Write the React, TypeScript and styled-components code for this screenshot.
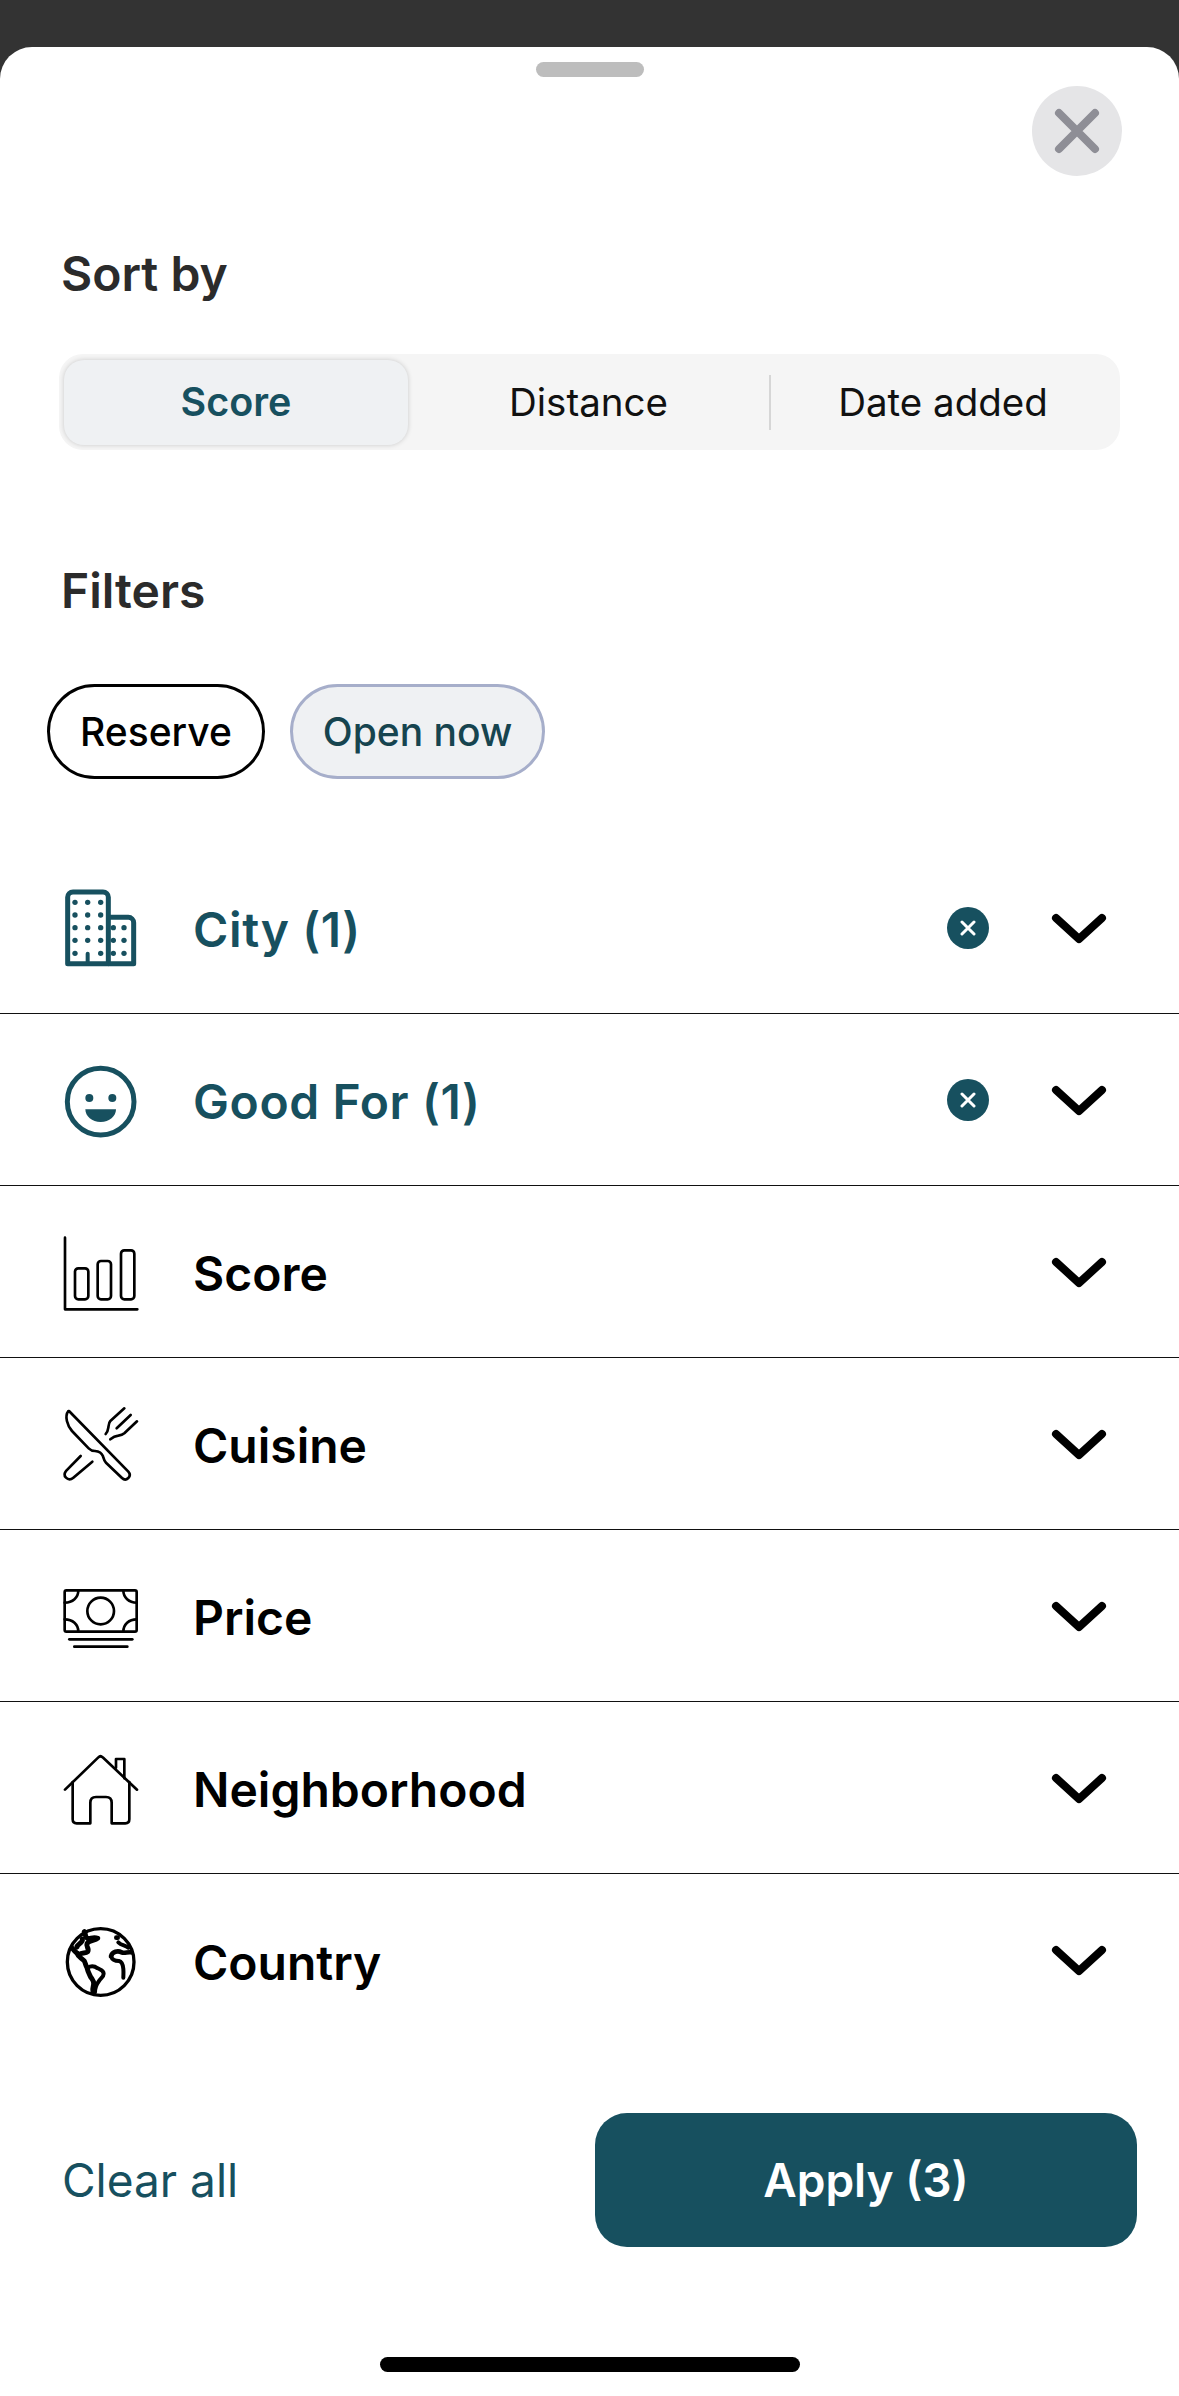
import React from "react";
import styled, { createGlobalStyle } from "styled-components";

const TEAL = "#17505f";

const GlobalStyle = createGlobalStyle`
    html, body {
        margin: 0;
        padding: 0;
        background: #fff;
    }
    * {
        box-sizing: border-box;
    }
    body {
        font-family: "Inter", "Liberation Sans", sans-serif;
    }
`;

const Page = styled.div`
    width: 1179px;
    height: 2396px;
    overflow: hidden;
    display: flex;
    flex-direction: column;
    background: #333333;
    padding-top: 47px;
`;

const Sheet = styled.div`
    flex: 1;
    display: flex;
    flex-direction: column;
    background: #fff;
    border-radius: 32px 32px 0 0;
    padding-top: 15px;
`;

const Handle = styled.div`
    width: 108px;
    height: 15px;
    border-radius: 8px;
    background: #bdbdbd;
    align-self: center;
`;

const CloseButton = styled.button`
    width: 90px;
    height: 90px;
    margin: 9px 57px 0 0;
    padding: 0;
    border: none;
    border-radius: 50%;
    background: #e5e5e7;
    align-self: flex-end;
    display: flex;
    align-items: center;
    justify-content: center;
`;

const Heading = styled.h2<{ $top: number }>`
    margin: ${(p) => p.$top}px 0 0 61px;
    font-size: 48px;
    line-height: 58px;
    font-weight: 600;
    color: #2b2b2b;
`;

const Segments = styled.div`
    margin: 51px 59px 0;
    height: 96px;
    padding: 5px;
    border-radius: 24px;
    background: #f5f5f5;
    display: flex;
    align-items: center;
`;

const Segment = styled.div<{ $active?: boolean; $width: number }>`
    width: ${(p) => p.$width}px;
    height: 85px;
    display: flex;
    align-items: center;
    justify-content: center;
    border-radius: 20px;
    font-size: ${(p) => (p.$active ? 39.5 : 38.5)}px;
    font-weight: ${(p) => (p.$active ? 600 : 400)};
    color: ${(p) => (p.$active ? TEAL : "#111")};
    background: ${(p) => (p.$active ? "#eff1f3" : "transparent")};
    box-shadow: ${(p) => (p.$active ? "0 0 5px rgba(0,0,0,0.18)" : "none")};
`;

const SegmentDivider = styled.div`
    width: 2px;
    height: 55px;
    background: #d6d6d6;
`;

const Pills = styled.div`
    margin: 64px 0 0 47px;
    display: flex;
    gap: 25px;
`;

const Pill = styled.div<{ $selected?: boolean }>`
    height: 95px;
    padding: 0 30px;
    border-radius: 48px;
    border: 3px solid ${(p) => (p.$selected ? "#a6aeca" : "#000")};
    background: ${(p) => (p.$selected ? "#eff1f3" : "#fff")};
    color: ${(p) => (p.$selected ? "#16444f" : "#000")};
    display: flex;
    align-items: center;
    font-size: 39px;
    font-weight: 500;
`;

const FilterList = styled.div`
    margin-top: 63px;
    display: flex;
    flex-direction: column;
`;

const Row = styled.div<{ $last?: boolean }>`
    height: 172px;
    padding: 0 68px 0 40px;
    display: flex;
    align-items: center;
    border-bottom: ${(p) => (p.$last ? "none" : "1px solid #111")};
`;

const IconBox = styled.svg`
    width: 120px;
    height: 120px;
    flex-shrink: 0;
`;

const RowLabel = styled.div<{ $active?: boolean }>`
    flex: 1;
    margin: 4px 0 0 33px;
    font-size: 48px;
    font-weight: 600;
    letter-spacing: ${(p) => (p.$active ? "0.6px" : "0")};
    color: ${(p) => (p.$active ? TEAL : "#000")};
`;

const ClearDot = styled.div`
    width: 42px;
    height: 42px;
    margin-right: 58px;
    border-radius: 50%;
    background: ${TEAL};
    display: flex;
    align-items: center;
    justify-content: center;
`;

const Chevron = styled.svg`
    width: 64px;
    height: 44px;
    flex-shrink: 0;
`;

const Footer = styled.div`
    margin-top: 67px;
    padding: 0 42px 0 62px;
    display: flex;
    align-items: center;
    justify-content: space-between;
`;

const ClearAll = styled.div`
    font-size: 46px;
    font-weight: 400;
    color: ${TEAL};
`;

const ApplyButton = styled.button`
    width: 542px;
    height: 134px;
    border: none;
    border-radius: 32px;
    background: ${TEAL};
    color: #fff;
    font-family: inherit;
    font-size: 46px;
    font-weight: 600;
`;

const HomeBar = styled.div`
    width: 420px;
    height: 15px;
    margin-top: 110px;
    border-radius: 8px;
    background: #000;
    align-self: center;
`;

const lineProps = {
    fill: "none",
    stroke: "#000",
    strokeWidth: 8,
    strokeLinecap: "round" as const,
    strokeLinejoin: "round" as const,
};

const cityDots = [
    [105, 127], [143, 127], [182, 127],
    [105, 165], [143, 165], [182, 165],
    [105, 203], [143, 203], [182, 203], [220, 203], [252, 203],
    [105, 241], [143, 241], [182, 241], [220, 241], [252, 241],
    [105, 280], [182, 280], [220, 280], [252, 280],
];

const CityIcon = () => (
    <IconBox viewBox="0 24 360 360">
        <g fill="none" stroke={TEAL} strokeWidth="15" strokeLinejoin="round">
            <path d="M83 311V112a16 16 0 0 1 16-16h90a16 16 0 0 1 16 16v199z" />
            <path d="M205 172h60a16 16 0 0 1 16 16v123h-76" />
            <path d="M143 311v-30" strokeWidth="12" strokeLinecap="round" />
        </g>
        {cityDots.map(([x, y]) => (
            <circle key={`${x}-${y}`} cx={x} cy={y} r="8" fill={TEAL} />
        ))}
    </IconBox>
);

const SmileIcon = () => (
    <IconBox viewBox="0 0 360 360">
        <circle cx="182" cy="185" r="100" fill="none" stroke={TEAL} strokeWidth="15" />
        <circle cx="148" cy="174" r="12" fill={TEAL} />
        <circle cx="217" cy="174" r="12" fill={TEAL} />
        <path d="M136 208h92c0 21-20 38-46 38s-46-17-46-38z" fill={TEAL} />
    </IconBox>
);

const ChartIcon = () => (
    <IconBox viewBox="0 3 360 360">
        <g {...lineProps}>
            <path d="M75 80v215h217" />
            <rect x="105" y="172" width="40" height="93" rx="10" />
            <rect x="173" y="150" width="40" height="115" rx="10" />
            <rect x="243" y="118" width="40" height="147" rx="10" />
        </g>
    </IconBox>
);

const CuisineIcon = () => (
    <IconBox viewBox="0 519 360 360">
        <g {...lineProps}>
            <path d="M87 600L265 782c6 7 6 13 0 19-6 6-13 6-19 0l-48-46c-6-6-7-12-9-19-3-8-12-15-24-16-7 0-13-2-19-8l-50-52c-14-16-23-44-11-60z" />
            <path d="M122 735l-43 44c-7 8-7 15-1 21 7 7 14 7 22 0l57-48" />
            <path d="M253 592l-42 38c-5 5-5 12-6 20-1 8-3 13-8 19" />
            <path d="M272 612l-42 40" />
            <path d="M291 631l-38 36c-6 5-11 6-18 7-10 1-17 5-24 11" />
        </g>
    </IconBox>
);

const MoneyIcon = () => (
    <IconBox viewBox="0 -15 360 360">
        <g {...lineProps}>
            <rect x="74" y="88" width="216" height="124" rx="5" />
            <circle cx="182" cy="150" r="40" />
            <path d="M74 125c24 0 41-15 41-37" />
            <path d="M250 88c0 22 17 37 40 37" />
            <path d="M74 175c24 0 41 15 41 37" />
            <path d="M250 212c0-22 17-37 40-37" />
            <path d="M88 235h189" />
            <path d="M103 257h159" />
        </g>
    </IconBox>
);

const HouseIcon = () => (
    <IconBox viewBox="0 6 360 360">
        <g {...lineProps}>
            <path d="M75 191L175 94c4-4 9-4 13 0l103 97" />
            <path d="M98 168v112c0 8 4 12 12 12h41v-62c0-11 6-17 17-17h30c11 0 17 6 17 17v62h41c8 0 12-4 12-12V168" />
            <path d="M228 125V99h25v58" />
        </g>
    </IconBox>
);

const GlobeIcon = () => (
    <IconBox viewBox="-45 -51 360 360">
        <circle cx="137" cy="135" r="100" fill="none" stroke="#000" strokeWidth="10" />
        <g fill="none" stroke="#000" strokeWidth="15" strokeLinecap="round" strokeLinejoin="round">
            <path d="M88 44c6 8 0 16 10 20 8 3 16-6 30 0-8 8-26 4-32 16-4 9 8 14 2 24-6 6-18 2-24 8-6 0-16-10-22-18" />
            <path d="M66 108c4 14 14 14 22 24 4 8 4 14 8 20 2 10 6 18 10 26 4 8 12 12 10 24-2 8-4 14-2 24" />
            <path d="M98 152c10-6 22-4 30 2 8 4 18 6 18 16 0 10-10 14-14 22-6 8-12 14-12 34" strokeWidth="12" />
            <path d="M66 90c-4-6 20-12 16-24" />
            <path d="M168 118c4-14 20-18 32-12 8 4 18-2 28 0" strokeWidth="14" />
            <path d="M168 118c4 12 12 14 24 14 10 2 12 12 13 24 1 12 0 18 0 26" strokeWidth="12" />
            <path d="M190 76c10 10 20 8 30 16" strokeWidth="12" />
            <path d="M184 62h4" strokeWidth="14" />
        </g>
    </IconBox>
);

const filters = [
    { name: "City (1)", Icon: CityIcon, active: true },
    { name: "Good For (1)", Icon: SmileIcon, active: true },
    { name: "Score", Icon: ChartIcon },
    { name: "Cuisine", Icon: CuisineIcon },
    { name: "Price", Icon: MoneyIcon },
    { name: "Neighborhood", Icon: HouseIcon },
    { name: "Country", Icon: GlobeIcon },
];

export default function App() {
    return (
        <Page>
            <GlobalStyle />
            <Sheet>
                <Handle />
                <CloseButton aria-label="Close">
                    <svg width="48" height="48" viewBox="0 0 48 48">
                        <path d="M6 6l36 36M42 6L6 42" stroke="#8e8e96" strokeWidth="8" strokeLinecap="round" />
                    </svg>
                </CloseButton>

                <Heading $top={69}>Sort by</Heading>
                <Segments>
                    <Segment $active $width={344}>Score</Segment>
                    <Segment $width={361}>Distance</Segment>
                    <SegmentDivider />
                    <Segment $width={344}>Date added</Segment>
                </Segments>

                <Heading $top={112}>Filters</Heading>
                <Pills>
                    <Pill>Reserve</Pill>
                    <Pill $selected>Open now</Pill>
                </Pills>

                <FilterList>
                    {filters.map(({ name, Icon, active }, index) => (
                        <Row key={name} $last={index === filters.length - 1}>
                            <Icon />
                            <RowLabel $active={active}>{name}</RowLabel>
                            {active && (
                                <ClearDot>
                                    <svg width="16" height="16" viewBox="0 0 16 16">
                                        <path d="M2 2l12 12M14 2L2 14" stroke="#fff" strokeWidth="3" strokeLinecap="round" />
                                    </svg>
                                </ClearDot>
                            )}
                            <Chevron viewBox="0 0 64 44">
                                <path d="M9 12l23 21 23-21" fill="none" stroke="#000" strokeWidth="8" strokeLinecap="round" strokeLinejoin="round" />
                            </Chevron>
                        </Row>
                    ))}
                </FilterList>

                <Footer>
                    <ClearAll>Clear all</ClearAll>
                    <ApplyButton>Apply (3)</ApplyButton>
                </Footer>
                <HomeBar />
            </Sheet>
        </Page>
    );
}
